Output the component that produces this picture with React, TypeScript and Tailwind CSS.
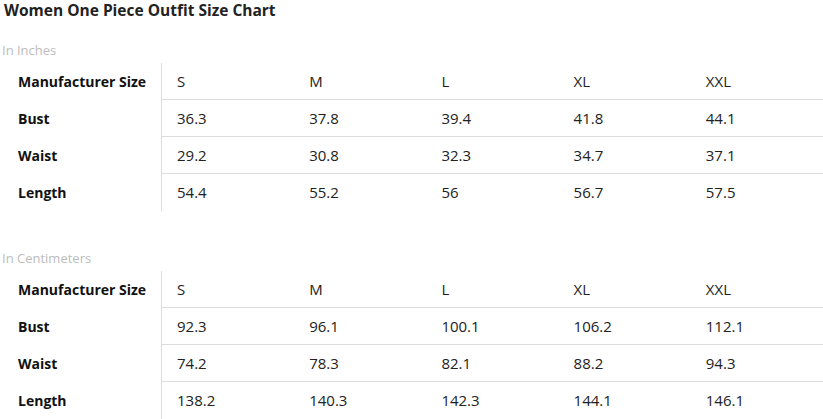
import React from "react";

type Table = { rows: { label: string; values: string[] }[] };

const inches: Table = {
  rows: [
    { label: "Manufacturer Size", values: ["S", "M", "L", "XL", "XXL"] },
    { label: "Bust", values: ["36.3", "37.8", "39.4", "41.8", "44.1"] },
    { label: "Waist", values: ["29.2", "30.8", "32.3", "34.7", "37.1"] },
    { label: "Length", values: ["54.4", "55.2", "56", "56.7", "57.5"] },
  ],
};

const cms: Table = {
  rows: [
    { label: "Manufacturer Size", values: ["S", "M", "L", "XL", "XXL"] },
    { label: "Bust", values: ["92.3", "96.1", "100.1", "106.2", "112.1"] },
    { label: "Waist", values: ["74.2", "78.3", "82.1", "88.2", "94.3"] },
    { label: "Length", values: ["138.2", "140.3", "142.3", "144.1", "146.1"] },
  ],
};

function SizeTable({ t }: { t: Table }) {
  return (
    <div className="flex">
      <div className="w-[161px] shrink-0">
        {t.rows.map((r) => (
          <div
            key={r.label}
            className="h-[37px] flex items-center pl-[18px] text-[14px] font-bold text-[#111]"
          >
            {r.label}
          </div>
        ))}
      </div>
      <div className="flex-1 border-l border-[#dcdcdc] divide-y divide-[#dcdcdc]">
        {t.rows.map((r) => (
          <div key={r.label} className="h-[37px] grid grid-cols-5">
            {r.values.map((v, i) => (
              <div
                key={i}
                className="flex items-center pl-[15px] text-[15px] text-[#222]"
              >
                {v}
              </div>
            ))}
          </div>
        ))}
      </div>
    </div>
  );
}

export default function App() {
  return (
    <div
      className="w-[823px] h-[419px] bg-white overflow-hidden"
      style={{ fontFamily: '"Open Sans", "Noto Sans", sans-serif' }}
    >
      <div className="pl-[4px] leading-[21px] text-[15.5px] font-bold text-[#222] whitespace-nowrap">
        Women One Piece Outfit Size Chart
      </div>
      <div className="mt-[21px] pb-[4px] pl-[2px] leading-[17px] text-[13px] text-[#bcbcbc]">
        In Inches
      </div>
      <SizeTable t={inches} />
      <div className="mt-[39px] pb-[4px] pl-[2px] leading-[17px] text-[13px] text-[#bcbcbc]">
        In Centimeters
      </div>
      <SizeTable t={cms} />
    </div>
  );
}
